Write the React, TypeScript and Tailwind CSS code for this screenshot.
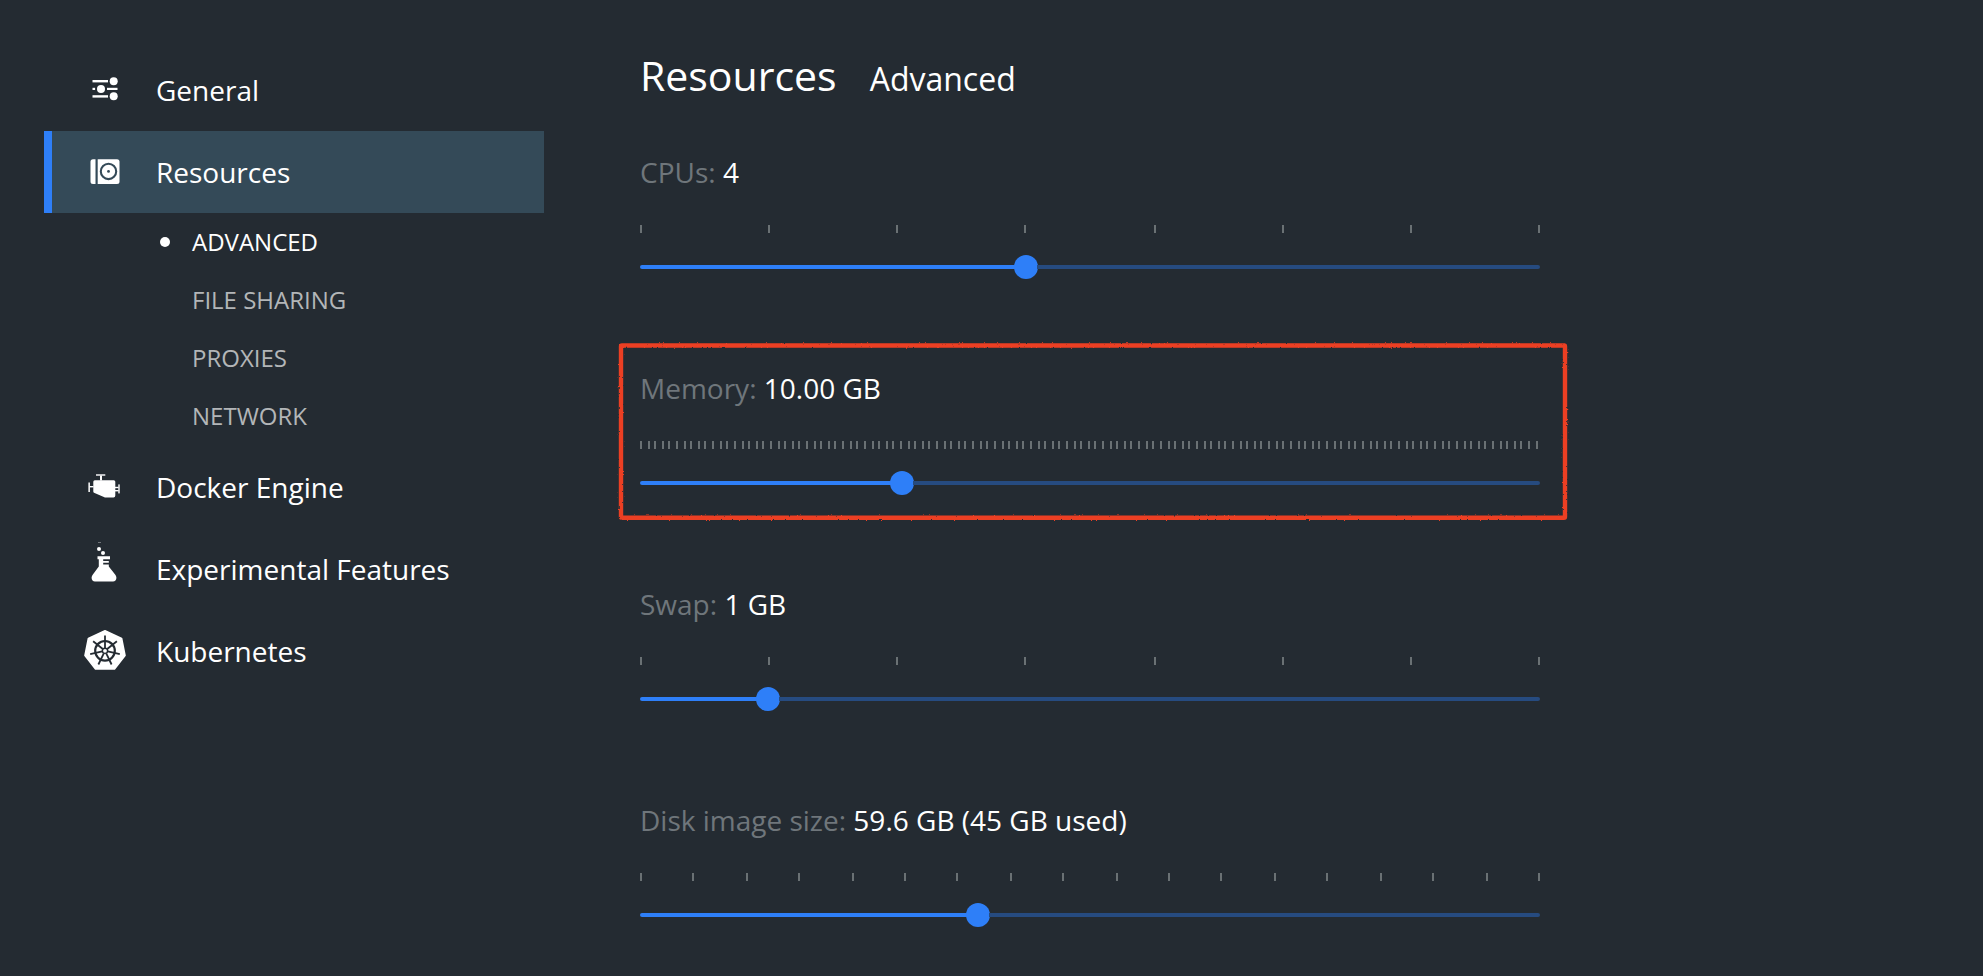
import { Fragment } from "react";

const WHEEL = [0, 1, 2, 3, 4, 5, 6].map((i) => (i * 360) / 7);

function GeneralIcon() {
  return (
    <svg width="26" height="24" viewBox="0 0 26 24" fill="#fff">
      <rect x="0.5" y="3" width="15.5" height="2.4" />
      <rect x="0.5" y="10.8" width="2.6" height="2.2" />
      <rect x="15" y="10.8" width="10.5" height="2.2" />
      <rect x="0.5" y="18.2" width="15.5" height="2.4" />
      <circle cx="21.7" cy="4.2" r="4" />
      <circle cx="9" cy="11.9" r="4" />
      <circle cx="21.7" cy="19.2" r="4" />
    </svg>
  );
}

function ResourcesIcon() {
  return (
    <svg width="30" height="26" viewBox="0 0 30 26">
      <path d="M3 .2H5.5V25H3A2.500 2.500 0 0 1 .5 22.500V2.700A2.500 2.500 0 0 1 3 .2Z" fill="#fff" />
      <path d="M7.700 .2H27A2.500 2.500 0 0 1 29.500 2.700V22.500A2.500 2.500 0 0 1 27 25H7.700Z" fill="#fff" />
      <circle cx="18.500" cy="12.400" r="7.700" fill="none" stroke="#344a58" strokeWidth="2.100" />
      <circle cx="18.500" cy="12.400" r="1.400" fill="#344a58" />
    </svg>
  );
}

function EngineIcon() {
  return (
    <svg width="32" height="24" viewBox="0 0 32 24" fill="#fff">
      <rect x="8" y="0.300" width="9.300" height="1.400" />
      <rect x="12" y="1.500" width="2" height="5" />
      <path d="M6.800 6.200H25.800A1.500 1.500 0 0 1 27.300 7.700V21.500A1.900 1.900 0 0 1 25.500 23.400H17L6 18.700A1.200 1.200 0 0 1 5.300 17.600V7.700A1.500 1.500 0 0 1 6.800 6.200Z" />
      <rect x="0.400" y="8.500" width="1.500" height="9.500" />
      <rect x="1.500" y="12" width="4" height="1.400" />
      <rect x="27" y="12.800" width="3.600" height="1.400" />
      <rect x="27" y="16" width="3.600" height="1.400" />
      <rect x="30.300" y="10.400" width="1.400" height="9" />
    </svg>
  );
}

function FlaskIcon() {
  return (
    <svg width="26" height="40" viewBox="0 0 26 40" fill="#fff">
      <rect x="7" y="0" width="3" height="0.700" opacity="0.500" />
      <circle cx="8" cy="7" r="2" />
      <circle cx="12" cy="11" r="2" />
      <path d="M6.500 14.300H19V17.300H12.200V18.900H17.800V20.800H12.200V22.500H17.800V24.500L24.500 33C26.500 36 25 39.600 22 39.600H4C1 39.600 -.5 36 1.500 33L7.800 24.500V17.300H6.500Z" />
    </svg>
  );
}

function KubernetesIcon() {
  return (
    <svg width="42" height="40" viewBox="0 0 42 40">
      <path d="M21 .8L37.600 8.400L41 25.500L30.500 39H11.500L1 25.500L4.400 8.400Z" fill="#fff" stroke="#fff" strokeWidth="1.600" strokeLinejoin="round" />
      <g fill="none" stroke="#242b32">
        <circle cx="21" cy="20.800" r="9.800" strokeWidth="2.200" />
        <circle cx="21" cy="20.800" r="2.600" strokeWidth="1.400" />
        {WHEEL.map((a) => (
          <path key={a} d="M21 18V5.600" strokeWidth="1.800" transform={`rotate(${a} 21 20.800)`} />
        ))}
      </g>
    </svg>
  );
}

const SUB_ITEMS = ["ADVANCED", "FILE SHARING", "PROXIES", "NETWORK"];

const NAV = [
  { label: "General", icon: <GeneralIcon />, pad: "pl-0.5 pb-0.5" },
  { label: "Resources", icon: <ResourcesIcon />, pad: "pl-0.5", active: true },
  { label: "Docker Engine", icon: <EngineIcon />, pad: "pb-0.5" },
  { label: "Experimental Features", icon: <FlaskIcon />, pad: "pb-3.5" },
  { label: "Kubernetes", icon: <KubernetesIcon />, pad: "pl-0.5 pb-0.5" },
];

const SLIDERS = [
  { label: "CPUs:", value: "4", ticks: 8, step: 128.286, fill: 386 },
  { label: "Memory:", value: "10.00 GB", ticks: 125, step: 7.22, fill: 262, marked: true },
  { label: "Swap:", value: "1 GB", ticks: 8, step: 128.286, fill: 128 },
  { label: "Disk image size:", value: "59.6 GB (45 GB used)", ticks: 18, step: 52.815, fill: 338 },
];

function Slider({ ticks, step, fill }: { ticks: number; step: number; fill: number }) {
  return (
    <>
      <svg className="mt-[34px] block" width="900" height="8" fill="#6a7174">
        {Array.from({ length: ticks }, (_, i) => (
          <rect key={i} x={2 * Math.round((i * step) / 2)} y="0" width="2" height="8" />
        ))}
      </svg>
      <div className="mt-[22px] flex h-6 w-[900px] items-center">
        <div className="h-1 rounded-l-full bg-[#2e7ff8]" style={{ width: fill - 11 }} />
        <div className="-mx-px size-6 shrink-0 rounded-full bg-[#2e7ff8]" />
        <div className="h-1 flex-1 rounded-r-full bg-[#264b80]" />
      </div>
    </>
  );
}

function Highlight() {
  return (
    <svg className="pointer-events-none absolute -top-[30px] -left-[24px]" width="954" height="184" fill="none">
      <filter id="rough" x="-2%" y="-5%" width="104%" height="110%" colorInterpolationFilters="sRGB">
        <feTurbulence type="fractalNoise" baseFrequency="0.6" numOctaves="2" seed="4" result="noise" />
        <feDisplacementMap in="SourceGraphic" in2="noise" scale="2.2" xChannelSelector="R" yChannelSelector="G" />
      </filter>
      <rect x="5" y="6.500" width="944" height="172.300" rx="1" stroke="#ec3f23" strokeWidth="4.400" filter="url(#rough)" />
    </svg>
  );
}

export default function App() {
  return (
    <div className="flex h-[976px] w-full overflow-hidden bg-[#242b32] font-['Open_Sans',sans-serif] text-white">
      <nav className="ml-11 w-[500px] shrink-0 pt-[49px]">
        {NAV.map((item) => (
          <Fragment key={item.label}>
            <div
              className={
                item.active
                  ? "flex h-[82px] items-center border-l-8 border-[#2e7ff8] bg-[#344a58]"
                  : "flex h-[82px] items-center border-l-8 border-transparent"
              }
            >
              <div className={`flex w-[104px] justify-center ${item.pad}`}>{item.icon}</div>
              <span className="text-[28px] leading-[38px]">{item.label}</span>
            </div>
            {item.active && (
              <ul className="mb-px">
                {SUB_ITEMS.map((sub, i) => (
                  <li
                    key={sub}
                    className={
                      i === 0
                        ? "flex h-[58px] items-center pl-[116px] text-2xl text-white"
                        : "flex h-[58px] items-center pl-[116px] text-2xl text-[#b3b6b8]"
                    }
                  >
                    <span className={i === 0 ? "mr-[22px] size-2.5 rounded-full bg-white" : "mr-[22px] size-2.5"} />
                    {sub}
                  </li>
                ))}
              </ul>
            )}
          </Fragment>
        ))}
      </nav>

      <main className="ml-24 flex-1 pt-[48px]">
        <header className="flex h-[105px] items-baseline gap-[33px]">
          <h1 className="text-[41px] leading-[54px]">Resources</h1>
          <h2 className="text-[32px] leading-[44px]">Advanced</h2>
        </header>
        {SLIDERS.map((s) => (
          <section key={s.label} className="relative h-[216px]">
            {s.marked && <Highlight />}
            <p className="text-[28px] leading-[38px]">
              <span className="text-[#6f767b]">{s.label}</span> {s.value}
            </p>
            <Slider ticks={s.ticks} step={s.step} fill={s.fill} />
          </section>
        ))}
      </main>
    </div>
  );
}
